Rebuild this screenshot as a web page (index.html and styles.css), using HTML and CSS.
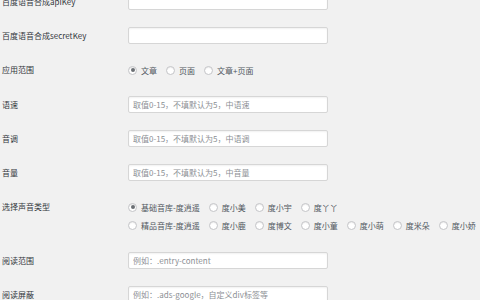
FILE: index.html
```html
<!DOCTYPE html>
<html lang="zh-CN">
<head>
    <meta charset="UTF-8">
    <meta name="viewport" content="width=device-width, initial-scale=1.0">
    <title>语音朗读设置</title>
    <link rel="stylesheet" href="styles.css">
</head>
<body>
<div class="form-table">
    <div class="row">
        <label class="row-label" for="api-key">百度语音合成apiKey</label>
        <div class="field"><input type="text" id="api-key" class="text-input"></div>
    </div>
    <div class="row">
        <label class="row-label" for="secret-key">百度语音合成secretKey</label>
        <div class="field"><input type="text" id="secret-key" class="text-input"></div>
    </div>
    <div class="row row-choice">
        <div class="row-label">应用范围</div>
        <div class="field">
            <div class="choices">
                <label class="choice"><input type="radio" name="scope" checked>文章</label>
                <label class="choice"><input type="radio" name="scope">页面</label>
                <label class="choice"><input type="radio" name="scope">文章+页面</label>
            </div>
        </div>
    </div>
    <div class="row">
        <label class="row-label" for="speed">语速</label>
        <div class="field"><input type="text" id="speed" class="text-input" placeholder="取值0-15，不填默认为5，中语速"></div>
    </div>
    <div class="row">
        <label class="row-label" for="pitch">音调</label>
        <div class="field"><input type="text" id="pitch" class="text-input" placeholder="取值0-15，不填默认为5，中语调"></div>
    </div>
    <div class="row">
        <label class="row-label" for="volume">音量</label>
        <div class="field"><input type="text" id="volume" class="text-input" placeholder="取值0-15，不填默认为5，中音量"></div>
    </div>
    <div class="row row-choice row-voices">
        <div class="row-label">选择声音类型</div>
        <div class="field">
            <div class="choices">
                <label class="choice"><input type="radio" name="voice" checked>基础音库-度逍遥</label>
                <label class="choice"><input type="radio" name="voice">度小美</label>
                <label class="choice"><input type="radio" name="voice">度小宇</label>
                <label class="choice"><input type="radio" name="voice">度丫丫</label>
            </div>
            <div class="choices">
                <label class="choice"><input type="radio" name="voice">精品音库-度逍遥</label>
                <label class="choice"><input type="radio" name="voice">度小鹿</label>
                <label class="choice"><input type="radio" name="voice">度博文</label>
                <label class="choice"><input type="radio" name="voice">度小童</label>
                <label class="choice"><input type="radio" name="voice">度小萌</label>
                <label class="choice"><input type="radio" name="voice">度米朵</label>
                <label class="choice"><input type="radio" name="voice">度小娇</label>
            </div>
        </div>
    </div>
    <div class="row">
        <label class="row-label" for="read-range">阅读范围</label>
        <div class="field"><input type="text" id="read-range" class="text-input" placeholder="例如：.entry-content"></div>
    </div>
    <div class="row">
        <label class="row-label" for="read-block">阅读屏蔽</label>
        <div class="field"><input type="text" id="read-block" class="text-input" placeholder="例如：.ads-google，自定义div标签等"></div>
    </div>
</div>
</body>
</html>
```

FILE: styles.css
```css
body, html {
    margin: 0;
    padding: 0;
    height: 100%;
    overflow: hidden;
    background-color: #f1f1f1;
    font-family: "Noto Sans CJK SC", "Noto Sans", sans-serif;
    font-size: 8px;
    color: #3c434a;
}
.form-table {
    margin-top: -15px;
}
.row {
    display: grid;
    grid-template-columns: 126px 1fr;
    padding: 8px 0 9px 2px;
}
.row-label {
    line-height: 17px;
    color: #32373c;
}
.row-choice .row-label {
    line-height: 18px;
}
.row-voices {
    padding-bottom: 10px;
}
.text-input {
    display: block;
    box-sizing: border-box;
    width: 200px;
    height: 17px;
    margin: 0;
    padding: 0 4px;
    border: 1px solid #d6d6d6;
    border-radius: 2px;
    background-color: #ffffff;
    box-shadow: inset 0 1px 2px rgba(0, 0, 0, 0.06);
    font-family: inherit;
    font-size: 8px;
    color: #32373c;
    outline: none;
}
.text-input::placeholder {
    color: #8c8f94;
}
.choices {
    display: flex;
    height: 18px;
}
.choice {
    display: flex;
    align-items: center;
    margin-right: 9px;
    color: #50575e;
    white-space: nowrap;
}
.choice input[type="radio"] {
    -webkit-appearance: none;
    appearance: none;
    box-sizing: border-box;
    width: 9px;
    height: 9px;
    margin: 0 4px 0 0;
    border: 1px solid #c3c4c7;
    border-radius: 50%;
    background-color: #ffffff;
    box-shadow: inset 0 1px 1px rgba(0, 0, 0, 0.08);
    display: flex;
    align-items: center;
    justify-content: center;
}
.choice input[type="radio"]:checked::before {
    content: "";
    width: 4px;
    height: 4px;
    border-radius: 50%;
    background-color: #6b6f74;
}
```
